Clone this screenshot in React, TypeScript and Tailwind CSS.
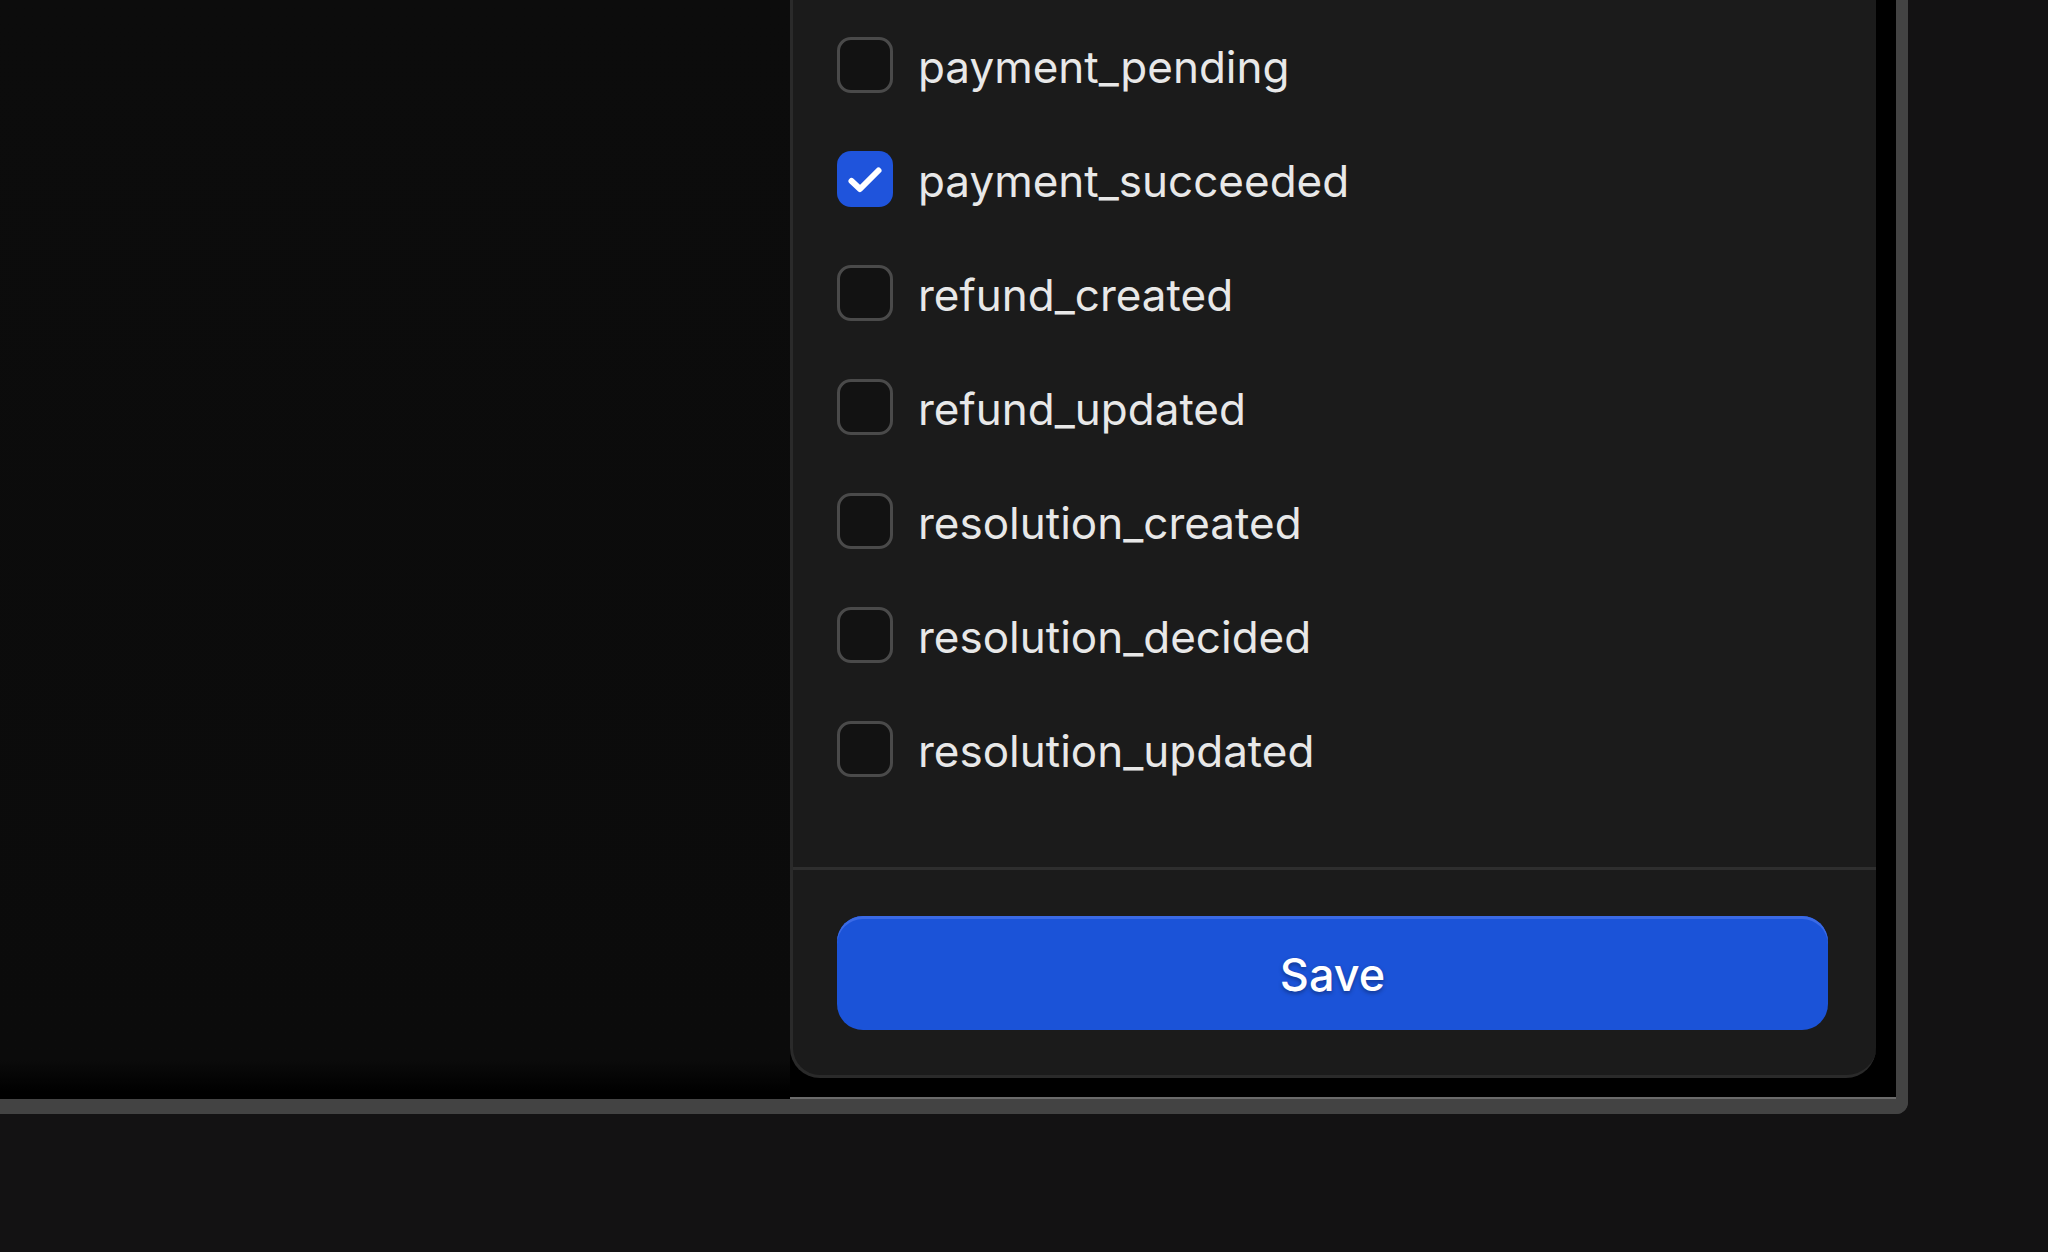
const events = [
  { name: 'payment_pending', checked: false },
  { name: 'payment_succeeded', checked: true },
  { name: 'refund_created', checked: false },
  { name: 'refund_updated', checked: false },
  { name: 'resolution_created', checked: false },
  { name: 'resolution_decided', checked: false },
  { name: 'resolution_updated', checked: false },
]

function Checkbox({ checked }: { checked: boolean }) {
  if (checked) {
    return (
      <div className="flex h-[56px] w-[56px] shrink-0 items-center justify-center rounded-[14px] bg-[#1f54dc]">
        <svg width="56" height="56" viewBox="0 0 56 56" fill="none" stroke="white" strokeWidth="6" strokeLinecap="round" strokeLinejoin="round">
          <path d="M14.5 30l8.5 8L41.5 19.5" />
        </svg>
      </div>
    )
  }
  return <div className="h-[56px] w-[56px] shrink-0 rounded-[14px] border-[3px] border-[#4a4a4a] bg-[#121212]" />
}

export default function App() {
  return (
    <div className="h-[1252px] w-[2048px] overflow-hidden bg-[#131213] font-['Inter','Liberation_Sans',sans-serif]">
      {/* app window */}
      <div className="flex h-[1114px] w-[1908px] overflow-hidden rounded-br-[12px] border-b-[15px] border-r-[12px] border-[#434343] bg-black shadow-[inset_0_-2px_0_#6b6b6b]">
        {/* backdrop */}
        <div className="flex-1 bg-[linear-gradient(to_bottom,#0c0c0c_0px,#0b0b0b_1060px,#000_1092px)]" />

        {/* drawer */}
        <div className="flex w-[1106px] flex-col pb-[21px] pr-[20px]">
          <div className="flex flex-1 flex-col rounded-b-[30px] border-b-[3px] border-l-[3px] border-[#2a2a2a] bg-[#1b1b1b]">
            <div className="flex flex-1 flex-col gap-[58px] pl-[44px] pt-[37px]">
              {events.map((e) => (
                <label key={e.name} className="flex h-[56px] items-center gap-[25px]">
                  <Checkbox checked={e.checked} />
                  <span className="pt-[4px] text-[44px] leading-none text-[#e8e8e8]">{e.name}</span>
                </label>
              ))}
            </div>
            <div className="h-[3px] bg-[#2e2e2e]" />
            <div className="pb-[45px] pl-[44px] pr-[48px] pt-[46px]">
              <button className="flex h-[114px] w-full items-center justify-center rounded-[26px] bg-[#1b53d8] pt-[3px] text-[45px] font-medium text-white shadow-[inset_0_3px_0_#3a6ae6] [text-shadow:0_2px_4px_rgba(0,0,0,0.35)]">
                Save
              </button>
            </div>
          </div>
        </div>
      </div>
    </div>
  )
}
